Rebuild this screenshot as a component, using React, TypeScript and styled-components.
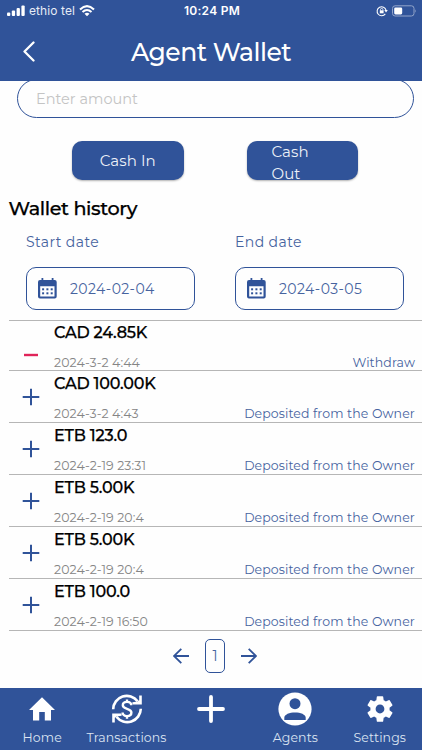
import React from "react";
import styled, { createGlobalStyle } from "styled-components";

const BLUE = "#305399";
const SOFT_BLUE = "#46639f";

const Global = createGlobalStyle`
  * { box-sizing: border-box; }
  body { margin: 0; background: #fefefe; }
`;

const Screen = styled.div`
  width: 422px;
  height: 750px;
  display: flex;
  flex-direction: column;
  overflow: hidden;
  background: #fefefe;
  font-family: Montserrat, Inter, sans-serif;
`;

interface TextProps { $size: number; $track?: number; $weight?: number; $color?: string; $line?: number }
const Text = styled.span<TextProps>`
  font-size: ${(p) => p.$size}px;
  line-height: ${(p) => p.$line ?? 20}px;
  letter-spacing: ${(p) => p.$track ?? 0}px;
  font-weight: ${(p) => p.$weight ?? 400};
  color: ${(p) => p.$color ?? SOFT_BLUE};
  white-space: nowrap;
`;
const StrongText = styled(Text)`
  -webkit-text-stroke: 0.25px currentColor;
`;

const Top = styled.header`
  flex: none;
  height: 81px;
  background: ${BLUE};
  color: #fff;
  z-index: 1;
`;
const StatusBar = styled.div`
  height: 22px;
  display: grid;
  grid-template-columns: 1fr auto 1fr;
  align-items: center;
  padding: 0 5px 0 7px;
  font-family: Inter, sans-serif;
`;
const StatusSide = styled.div<{ $end?: boolean }>`
  display: flex;
  align-items: center;
  gap: 4px;
  justify-content: ${(p) => (p.$end ? "flex-end" : "flex-start")};
`;
const TitleBar = styled.div`
  height: 59px;
  display: grid;
  grid-template-columns: 58px 1fr 58px;
  align-items: center;
  justify-items: center;
`;
const Content = styled.main`
  flex: 1;
  min-height: 0;
  display: flex;
  flex-direction: column;
`;
const AmountField = styled.div`
  flex: none;
  height: 39px;
  margin: -2px 8.5px 0 16.5px;
  padding: 1px 0 0 18.5px;
  display: flex;
  align-items: center;
  border: 1.4px solid ${BLUE};
  border-radius: 20px;
`;
const Actions = styled.div`
  display: flex;
  gap: 63px;
  margin: 23px 0 0 72px;
`;
const ActionButton = styled.button<{ $wrap?: boolean }>`
  width: 111.5px;
  height: 39px;
  padding: ${(p) => (p.$wrap ? "0 0 0 25px" : "0")};
  display: flex;
  flex-direction: column;
  align-items: ${(p) => (p.$wrap ? "flex-start" : "center")};
  justify-content: ${(p) => (p.$wrap ? "flex-start" : "center")};
  border: 0;
  border-radius: 10px;
  background: ${BLUE};
  box-shadow: 0 1px 2px rgba(0, 0, 0, 0.3);
  font-family: inherit;
`;
const Heading = styled.h2`
  margin: 16px 0 0 8.5px;
  height: 24px;
  font-weight: inherit;
  display: flex;
`;
const Dates = styled.div`
  display: grid;
  grid-template-columns: 169px 169px;
  column-gap: 40px;
  margin: 12px 0 0 26px;
`;
const DateColumn = styled.div`
  display: flex;
  flex-direction: column;
  gap: 15px;
`;
const DateField = styled.div`
  height: 43px;
  display: flex;
  align-items: center;
  gap: 13px;
  padding-left: 11px;
  border: 1.4px solid ${BLUE};
  border-radius: 10px;
`;
const History = styled.div`
  margin: 10px 0 0 8.5px;
  border-top: 1px solid #b6b6b6;
`;
const Entry = styled.div<{ $short?: boolean }>`
  height: ${(p) => (p.$short ? 50 : 52)}px;
  display: grid;
  grid-template-columns: 45.5px 1fr auto;
  padding: 0 7px ${(p) => (p.$short ? 0 : 1)}px 0;
  border-bottom: 1px solid #b6b6b6;
`;
const Mark = styled.div<{ $low?: boolean }>`
  display: flex;
  align-items: flex-start;
  padding: ${(p) => (p.$low ? "25px" : "17px")} 0 0 13px;
`;
const Lines = styled.div<{ $end?: boolean; $short?: boolean }>`
  display: flex;
  flex-direction: column;
  justify-content: ${(p) => (p.$end ? "flex-end" : "space-between")};
  padding-top: ${(p) => (p.$short ? 2 : 3)}px;
`;
const Pager = styled.div`
  height: 34px;
  margin: 8px 0 0 8px;
  display: flex;
  align-items: center;
  justify-content: center;
  gap: 16px;
`;
const PageNumber = styled.div`
  width: 20px;
  height: 34px;
  display: flex;
  align-items: center;
  justify-content: center;
  border: 1.3px solid ${BLUE};
  border-radius: 5px;
`;
const TabBar = styled.nav`
  flex: none;
  height: 62px;
  display: grid;
  grid-template-columns: repeat(5, 1fr);
  background: ${BLUE};
`;
const Tab = styled.div`
  display: flex;
  flex-direction: column;
  align-items: center;
`;
const TabIcon = styled.div`
  height: 40px;
  padding-top: 1px;
  display: flex;
  align-items: center;
`;

const Signal = () => (
  <svg width="18" height="12" viewBox="0 0 18 12" fill="#fff">
    <rect x="0" y="7.5" width="3.3" height="3.5" rx="1" />
    <rect x="4.8" y="5.5" width="3.3" height="5.5" rx="1" />
    <rect x="9.6" y="3" width="3.3" height="8" rx="1" />
    <rect x="14.4" y="0.5" width="3.3" height="10.5" rx="1" />
  </svg>
);
const Wifi = () => (
  <svg width="16" height="12" viewBox="0 0 16 12" fill="none" stroke="#fff" strokeWidth="2.1">
    <path d="M1 4.4Q8-2 15 4.4" />
    <path d="M3.5 7Q8 3 12.5 7" />
    <path d="M8 11.2L5.5 8.7Q8 6.7 10.5 8.7Z" fill="#fff" stroke="none" />
  </svg>
);
const RotationLock = () => (
  <svg width="12" height="12" viewBox="0 0 12 12" fill="none" stroke="#fff" strokeWidth="1.1">
    <path d="M9.3 8.9A4.5 4.5 0 1 1 10 5.2" />
    <path d="M8.3 5h3.5L10 7.5Z" fill="#fff" stroke="none" />
    <rect x="3.8" y="5.3" width="3.8" height="3" fill="#fff" stroke="none" />
    <path d="M4.5 5.5V4.6a1.2 1.2 0 0 1 2.4 0v.9" strokeWidth=".8" />
  </svg>
);
const Battery = () => (
  <svg width="25" height="12" viewBox="0 0 25 12">
    <rect x=".5" y=".8" width="21.5" height="10.2" rx="2.6" fill="none" stroke="#93a5ca" />
    <rect x="2.2" y="2.4" width="8" height="7" rx="1.3" fill="#fff" />
    <path d="M23.3 4.2q1.6 1.7 0 3.5z" fill="#93a5ca" />
  </svg>
);
const Back = () => (
  <svg width="12" height="21" viewBox="0 0 12 21" fill="none" stroke="#fff" strokeWidth="2.3" strokeLinecap="round" strokeLinejoin="round">
    <path d="M10.5 1.5L1.5 10.5l9 9" />
  </svg>
);
const Calendar = () => (
  <svg width="19" height="22" viewBox="0 0 19 22">
    <path fill={BLUE} fillRule="evenodd" d="M3.5 0h1.8v2h8.4V0h1.8v2h1.2q2 0 2 2v14.5q0 2-2 2H2q-2 0-2-2V4q0-2 2-2h1.5zM2.2 8.2v10.3h14.3V8.2z" />
    <g fill={BLUE}>
      <rect x="4.1" y="10.3" width="2" height="2" /><rect x="8.4" y="10.3" width="2" height="2" /><rect x="12.7" y="10.3" width="2" height="2" />
      <rect x="4.1" y="14.3" width="2" height="2" /><rect x="8.4" y="14.3" width="2" height="2" /><rect x="12.7" y="14.3" width="2" height="2" />
    </g>
  </svg>
);
const PlusMark = () => (
  <svg width="18" height="18" viewBox="0 0 18 18" stroke={BLUE} strokeWidth="2"><path d="M9 .7v16.6M.7 9h16.6" /></svg>
);
const MinusMark = () => (
  <svg width="18" height="18" viewBox="0 0 18 18" stroke="#e02459" strokeWidth="2.4"><path d="M2 9h14" /></svg>
);
const Arrow = ({ right }: { right?: boolean }) => (
  <svg width="16" height="16" viewBox="0 0 16 16" fill="none" stroke={BLUE} strokeWidth="1.8">
    <path d={right ? "M0 8h14.5M7.7.8L15 8l-7.3 7.2" : "M16 8H1.5M8.3.8L1 8l7.3 7.2"} />
  </svg>
);
const Home = () => (
  <svg width="26" height="24" viewBox="0 0 26 24" fill="#fff"><path d="M13 .3L0 13h4v10.4h6.2V15h5.6v8.4H22V13h4z" /></svg>
);
const Exchange = () => (
  <svg width="32" height="32" viewBox="0 0 32 32" fill="none" stroke="#fff" strokeWidth="2.6">
    <path d="M2.2 16.2A13.6 13.6 0 0 1 26.6 8.2" />
    <path d="M29.8 15.8A13.6 13.6 0 0 1 5.4 23.8" />
    <path d="M30.8 2.6v9H21.4v-2.4l5-.6 1.8-1.4V2.6z" fill="#fff" stroke="none" />
    <path d="M1.2 29.4v-9h9.4v2.4l-5 .6-1.8 1.4v4.6z" fill="#fff" stroke="none" />
    <path d="M20.2 12.2c0-2-1.7-3.3-4.2-3.3s-4.2 1.3-4.2 3.4c0 4.6 8.6 2.5 8.6 7.2 0 2.2-1.9 3.6-4.4 3.6s-4.4-1.5-4.4-3.6M16 6.4v3M16 22.5v3.3" strokeWidth="2.4" />
  </svg>
);
const Plus = () => (
  <svg width="28" height="28" viewBox="0 0 28 28" stroke="#fff" strokeWidth="3.8" strokeLinecap="round"><path d="M14 2v24M2 14h24" /></svg>
);
const Account = () => (
  <svg width="34" height="34" viewBox="0 0 34 34">
    <circle cx="17" cy="17" r="16.6" fill="#fff" />
    <circle cx="17" cy="11.7" r="5.5" fill={BLUE} />
    <path d="M6.3 28v-2.2c0-3.4 5.2-5.3 10.7-5.3s10.7 1.9 10.7 5.3V28z" fill={BLUE} />
  </svg>
);
const Gear = () => (
  <svg width="32" height="32" viewBox="0 0 24 24" fill="#fff">
    <path d="M19.14 12.94c.04-.3.06-.61.06-.94 0-.32-.02-.64-.07-.94l2.03-1.58a.49.49 0 0 0 .12-.61l-1.92-3.32a.488.488 0 0 0-.59-.22l-2.39.96c-.5-.38-1.03-.7-1.62-.94l-.36-2.54a.484.484 0 0 0-.48-.41h-3.84c-.24 0-.43.17-.47.41l-.36 2.54c-.59.24-1.13.57-1.62.94l-2.39-.96c-.22-.08-.47 0-.59.22L2.74 8.87c-.12.21-.08.47.12.61l2.03 1.58c-.05.3-.09.63-.09.94s.02.64.07.94l-2.03 1.58a.49.49 0 0 0-.12.61l1.92 3.32c.12.22.37.29.59.22l2.39-.96c.5.38 1.03.7 1.62.94l.36 2.54c.05.24.24.41.48.41h3.84c.24 0 .44-.17.47-.41l.36-2.54c.59-.24 1.13-.56 1.62-.94l2.39.96c.22.08.47 0 .59-.22l1.92-3.32c.12-.22.07-.47-.12-.61l-2.01-1.58zM12 15.3c-1.8 0-3.3-1.5-3.3-3.3s1.5-3.3 3.3-3.3 3.3 1.5 3.3 3.3-1.5 3.3-3.3 3.3z" />
  </svg>
);

interface Item { amount: string; date: string; note: string; out?: boolean }
const DEPOSIT = "Deposited from the Owner";
const items: Item[] = [
  { amount: "CAD 24.85K", date: "2024-3-2 4:44", note: "Withdraw", out: true },
  { amount: "CAD 100.00K", date: "2024-3-2 4:43", note: DEPOSIT },
  { amount: "ETB 123.0", date: "2024-2-19 23:31", note: DEPOSIT },
  { amount: "ETB 5.00K", date: "2024-2-19 20:4", note: DEPOSIT },
  { amount: "ETB 5.00K", date: "2024-2-19 20:4", note: DEPOSIT },
  { amount: "ETB 100.0", date: "2024-2-19 16:50", note: DEPOSIT },
];

const tabs = [
  { label: "Home", icon: <Home /> },
  { label: "Transactions", icon: <Exchange /> },
  { label: "", icon: <Plus /> },
  { label: "Agents", icon: <Account /> },
  { label: "Settings", icon: <Gear /> },
];

export default function App() {
  return (
    <Screen>
      <Global />
      <Top>
        <StatusBar>
          <StatusSide><Signal /><Text $size={12} $color="#e6ecf6" $track={0.1}>ethio tel</Text><Wifi /></StatusSide>
          <Text $size={12} $color="#fff" $weight={600} $track={0.25}>10:24 PM</Text>
          <StatusSide $end><RotationLock /><Battery /></StatusSide>
        </StatusBar>
        <TitleBar>
          <Back />
          <Text $size={25} $weight={500} $color="#fff" $line={30} $track={-0.5}>Agent Wallet</Text>
        </TitleBar>
      </Top>
      <Content>
        <AmountField><Text $size={14.5} $color="#c4c4c4">Enter amount</Text></AmountField>
        <Actions>
          <ActionButton><Text $size={15} $color="#edf1f8" $track={0.1}>Cash In</Text></ActionButton>
          <ActionButton $wrap>
            <Text $size={15} $color="#edf1f8" $track={0.1} $line={21.5}>Cash</Text>
            <Text $size={15} $color="#edf1f8" $track={0.1} $line={21.5}>Out</Text>
          </ActionButton>
        </Actions>
        <Heading><StrongText $size={19.2} $weight={500} $color="#000" $line={24} $track={-0.38}>Wallet history</StrongText></Heading>
        <Dates>
          <DateColumn>
            <Text $size={14} $track={0.4}>Start date</Text>
            <DateField><Calendar /><Text $size={14} $track={0.4}>2024-02-04</Text></DateField>
          </DateColumn>
          <DateColumn>
            <Text $size={14} $track={0.4}>End date</Text>
            <DateField><Calendar /><Text $size={14} $track={0.4}>2024-03-05</Text></DateField>
          </DateColumn>
        </Dates>
        <History>
          {items.map((it, i) => (
            <Entry key={i} $short={it.out}>
              <Mark $low={it.out}>{it.out ? <MinusMark /> : <PlusMark />}</Mark>
              <Lines $short={it.out}>
                <StrongText $size={16} $weight={500} $color="#000" $track={-0.2}>{it.amount}</StrongText>
                <Text $size={12.5} $color="#858585" $track={0.1} $line={15}>{it.date}</Text>
              </Lines>
              <Lines $end><Text $size={12.5} $track={0.12} $line={15}>{it.note}</Text></Lines>
            </Entry>
          ))}
        </History>
        <Pager><Arrow /><PageNumber><Text $size={14}>1</Text></PageNumber><Arrow right /></Pager>
      </Content>
      <TabBar>
        {tabs.map((t, i) => (
          <Tab key={i}>
            <TabIcon>{t.icon}</TabIcon>
            {t.label && <Text $size={12.5} $color="#dce4f2" $track={0.1}>{t.label}</Text>}
          </Tab>
        ))}
      </TabBar>
    </Screen>
  );
}
